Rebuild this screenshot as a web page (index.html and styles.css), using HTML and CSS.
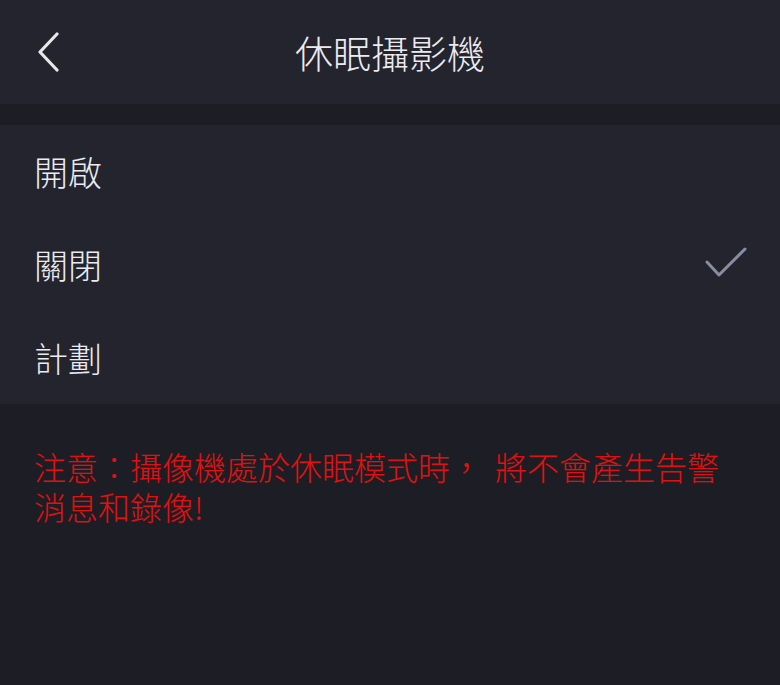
FILE: index.html
```html
<!DOCTYPE html>
<html lang="zh-Hant">
<head>
<meta charset="utf-8">
<link rel="stylesheet" href="styles.css">
</head>
<body>
<div class="page">
  <header class="header">
    <span class="back">
      <svg width="24" height="40" viewBox="0 0 24 40"><path d="M21 2 L4 20 L21 38" fill="none" stroke="#e8e8ec" stroke-width="3.2" stroke-linecap="round" stroke-linejoin="round"/></svg>
    </span>
    <h1 class="title">休眠攝影機</h1>
  </header>
  <div class="gap"></div>
  <ul class="list">
    <li class="row"><span>開啟</span></li>
    <li class="row"><span>關閉</span>
      <svg class="check" width="44" height="32" viewBox="0 0 44 32"><path d="M3 15 L15 28 L41 2" fill="none" stroke="#8a8d9f" stroke-width="3" stroke-linecap="round" stroke-linejoin="round"/></svg>
    </li>
    <li class="row"><span>計劃</span></li>
  </ul>
  <p class="note">注意：攝像機處於休眠模式時， 將不會產生告警消息和錄像!</p>
</div>
</body>
</html>
```
FILE: styles.css
```css
html, body {
  margin: 0;
  padding: 0;
  background: #1d1e25;
  font-family: "Noto Sans CJK TC", "Noto Sans CJK SC", sans-serif;
}
.page {
  width: 780px;
  height: 685px;
  overflow: hidden;
}
.header {
  height: 104px;
  background: #23242e;
  position: relative;
  display: flex;
  align-items: center;
  justify-content: center;
}
.back {
  position: absolute;
  left: 36px;
  top: 32px;
  display: flex;
}
.title {
  margin: 0;
  font-weight: 300;
  font-size: 38px;
  color: #ececf0;
  line-height: 1;
}
.gap {
  height: 21px;
}
.list {
  margin: 0;
  padding: 0;
  list-style: none;
  background: #23242e;
}
.row {
  height: 93px;
  display: flex;
  align-items: center;
  justify-content: space-between;
  padding: 0 32px 0 34px;
  font-size: 34px;
  font-weight: 300;
  color: #ececf0;
}
.check {
  margin-top: -4px;
}
.note {
  margin: 42px 0 0 34px;
  width: 700px;
  font-size: 32px;
  font-weight: 300;
  line-height: 40px;
  word-spacing: 6px;
  color: #e3100f;
}
```
